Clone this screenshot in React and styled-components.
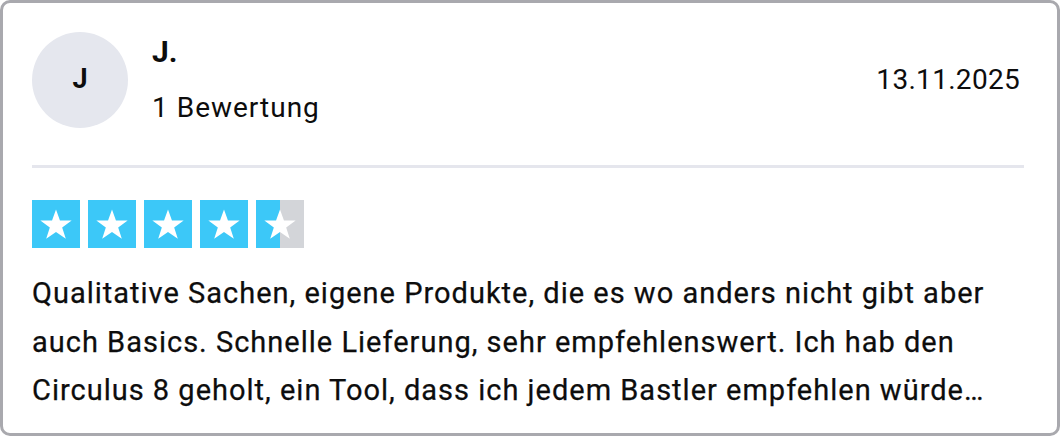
import React from 'react';
import styled, { createGlobalStyle } from 'styled-components';

const GlobalStyle = createGlobalStyle`
  html, body {
    margin: 0;
    padding: 0;
    background: #fff;
  }
  body {
    font-family: Roboto, "Liberation Sans", sans-serif;
    color: #0d0d0d;
  }
`;

const Card = styled.article`
  box-sizing: border-box;
  width: 1060px;
  height: 436px;
  border: 3px solid #a9a9ae;
  border-radius: 10px;
  padding: 29px 33px 0 29px;
  background: #fff;
  overflow: hidden;
`;

const Header = styled.header`
  display: flex;
  align-items: center;
  gap: 24px;
  height: 96px;
`;

const Avatar = styled.div`
  width: 96px;
  height: 96px;
  flex: none;
  border-radius: 50%;
  background: #e5e7ee;
  display: flex;
  align-items: center;
  justify-content: center;
  font-size: 27px;
  font-weight: 700;
  padding-bottom: 3px;
  box-sizing: border-box;
`;

const Author = styled.div`
  flex: 1;
  align-self: stretch;
  display: flex;
  flex-direction: column;
  justify-content: space-between;
  padding: 5px 0 5px;
`;

const Name = styled.div`
  font-size: 30px;
  font-weight: 700;
  line-height: 30px;
`;

const Count = styled.div`
  font-size: 28px;
  letter-spacing: 1px;
  line-height: 30px;
`;

const DateLabel = styled.time`
  font-size: 28px;
  letter-spacing: 0.3px;
  margin-right: 4px;
  padding-bottom: 2px;
`;

const Divider = styled.hr`
  border: none;
  height: 3px;
  background: #e5e6ed;
  margin: 37px 0 32px;
`;

const Stars = styled.div`
  display: flex;
  gap: 8px;
`;

const StarBox = styled.div`
  width: 48px;
  height: 48px;
  display: flex;
  align-items: center;
  justify-content: center;
  background: ${p => p.$half
    ? 'linear-gradient(90deg, #3cc8f8 50%, #d3d5d9 50%)'
    : p.$on ? '#3cc8f8' : '#d3d5d9'};
`;

const Body = styled.p`
  margin: 21px 0 0;
  font-size: 29px;
  letter-spacing: 1px;
  line-height: 48.5px;
  -webkit-text-stroke: 0.25px #0d0d0d;
`;

const Star = () => (
  <svg width="38" height="38" viewBox="0 0 24 24">
    <path
      fill="#fff"
      d="M12 2.8l2.5 7h7.4l-6 4.4 2.3 7.1L12 17l-6.2 4.3 2.3-7.1-6-4.4h7.4z"
    />
  </svg>
);

const rating = 4.5;

export default function App() {
  return (
    <>
      <GlobalStyle />
      <Card>
        <Header>
          <Avatar>J</Avatar>
          <Author>
            <Name>J.</Name>
            <Count>1 Bewertung</Count>
          </Author>
          <DateLabel>13.11.2025</DateLabel>
        </Header>
        <Divider />
        <Stars>
          {[1, 2, 3, 4, 5].map(i => (
            <StarBox key={i} $on={i <= rating} $half={i > rating && i - 0.5 <= rating}>
              <Star />
            </StarBox>
          ))}
        </Stars>
        <Body>
          Qualitative Sachen, eigene Produkte, die es wo anders nicht gibt aber auch Basics.
          Schnelle Lieferung, sehr empfehlenswert. Ich hab den Circulus 8 geholt, ein Tool,
          dass ich jedem Bastler empfehlen würde…
        </Body>
      </Card>
    </>
  );
}
